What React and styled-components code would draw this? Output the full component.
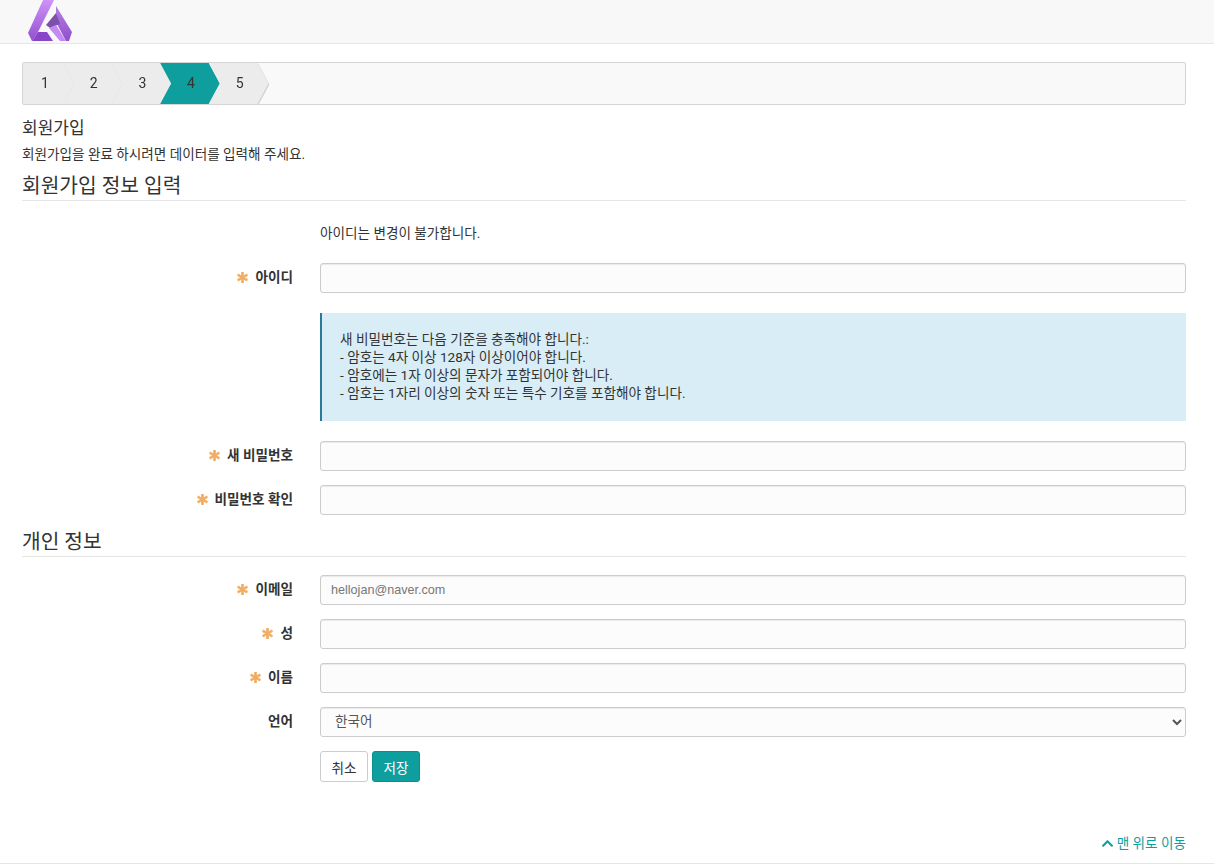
import React from 'react';
import styled, { createGlobalStyle } from 'styled-components';
import { FaAsterisk, FaChevronUp } from 'react-icons/fa';

const steps = ['1', '2', '3', '4', '5'];

const Logo = () => (
  <svg width="46" height="42" viewBox="0 0 46 42">
    <defs>
      <linearGradient id="logoLeft" x1="0" y1="0" x2="0" y2="1">
        <stop offset="0" stopColor="#cf92f8" />
        <stop offset="1" stopColor="#9050d0" />
      </linearGradient>
      <linearGradient id="logoRight" x1="0" y1="0" x2="0" y2="1">
        <stop offset="0" stopColor="#b67ce8" />
        <stop offset="1" stopColor="#8f50cc" />
      </linearGradient>
    </defs>
    <polygon points="16,0 27,0 11,32 5,41 1,33" fill="url(#logoLeft)" />
    <polygon points="5,41 11,32 20,32 26,41" fill="#8a46ca" />
    <polygon points="29,6 45,32 42,41 39,41 31,26 29,13" fill="url(#logoRight)" />
    <polygon points="19,25 29,13 33,24 23,28" fill="#7b52a8" />
    <polygon points="22,28 29,25 39,41 33,41" fill="#c58af2" />
  </svg>
);

export default function App() {
  return (
    <>
      <GlobalStyle />
      <Header>
        <LogoWrap>
          <Logo />
        </LogoWrap>
      </Header>
      <Page>
        <Wizard>
          {steps.map((s) => (
            <StepWrap key={s}>
              <Step active={s === '4'}>{s}</Step>
            </StepWrap>
          ))}
        </Wizard>
        <Title>회원가입</Title>
        <Sub>회원가입을 완료 하시려면 데이터를 입력해 주세요.</Sub>
        <Legend>회원가입 정보 입력</Legend>
        <Note>아이디는 변경이 불가합니다.</Note>
        <Row>
          <Label required>아이디</Label>
          <Input />
        </Row>
        <Alert>
          새 비밀번호는 다음 기준을 충족해야 합니다.:
          <br />- 암호는 4자 이상 128자 이상이어야 합니다.
          <br />- 암호에는 1자 이상의 문자가 포함되어야 합니다.
          <br />- 암호는 1자리 이상의 숫자 또는 특수 기호를 포함해야 합니다.
        </Alert>
        <Row>
          <Label required>새 비밀번호</Label>
          <Input type="password" />
        </Row>
        <Row>
          <Label required>비밀번호 확인</Label>
          <Input type="password" />
        </Row>
        <Legend second>개인 정보</Legend>
        <Fields>
          <Row>
            <Label required>이메일</Label>
            <Input defaultValue="hellojan@naver.com" />
          </Row>
          <Row>
            <Label required>성</Label>
            <Input />
          </Row>
          <Row>
            <Label required>이름</Label>
            <Input />
          </Row>
          <Row>
            <Label>언어</Label>
            <Select defaultValue="ko">
              <option value="ko">한국어</option>
            </Select>
          </Row>
        </Fields>
        <Actions>
          <Button>취소</Button>
          <Button primary>저장</Button>
        </Actions>
        <TopLink>
          <FaChevronUp size={13} />
          맨 위로 이동
        </TopLink>
      </Page>
      <Footer />
    </>
  );
}

const Label = ({ required, children }) => (
  <LabelText>
    {required && <Star />}
    {children}
  </LabelText>
);

const GlobalStyle = createGlobalStyle`
  html, body {
    margin: 0;
    padding: 0;
    background: #fff;
    overflow: hidden;
  }
  body {
    font-family: Roboto, 'Noto Sans CJK KR', sans-serif;
    font-size: 13.6px;
    color: #333;
  }
  * {
    box-sizing: border-box;
  }
`;

const Header = styled.div`
  height: 44px;
  background: #f8f8f8;
  border-bottom: 1px solid #e7e7e7;
  overflow: hidden;
`;

const LogoWrap = styled.div`
  padding-left: 27px;
  height: 42px;
`;

const Page = styled.div`
  padding: 18px 28px 0 22px;
`;

const Wizard = styled.div`
  display: flex;
  height: 43px;
  background: #f9f9f9;
  border: 1px solid #d4d4d4;
  border-radius: 2px;
  overflow: hidden;
`;

const StepWrap = styled.div`
  width: 48.6px;
  filter: drop-shadow(1px 1px 0 #d2d2d2);

  &:first-child {
    width: 40px;
  }
`;

const Step = styled.div`
  width: 59.6px;
  height: 41px;
  line-height: 41px;
  padding-left: 13px;
  padding-right: 11px;
  text-align: center;
  font-size: 14px;
  color: #333;
  background: ${(p) => (p.active ? '#0e9e9e' : '#ececec')};
  clip-path: polygon(0 0, 48.6px 0, 100% 50%, 48.6px 100%, 0 100%, 11px 50%);

  ${StepWrap}:first-child & {
    width: 51px;
    padding-left: 4px;
    clip-path: polygon(0 0, 40px 0, 100% 50%, 40px 100%, 0 100%);
  }
`;

const Title = styled.h1`
  margin: 14px 0 0;
  font-size: 17px;
  font-weight: 400;
  line-height: 18px;
  color: #333;
`;

const Sub = styled.p`
  margin: 9px 0 0;
  font-size: 13.6px;
  line-height: 16px;
  color: #333;
`;

const Legend = styled.h2`
  margin: ${(p) => (p.second ? '12px' : '6px')} 0 ${(p) => (p.second ? '18px' : '0')};
  height: ${(p) => (p.second ? '30px' : '33px')};
  padding-top: ${(p) => (p.second ? '3px' : '6px')};
  font-size: 20.3px;
  font-weight: 400;
  line-height: 24px;
  color: #333;
  border-bottom: 1px solid #e5e5e5;
`;

const Note = styled.div`
  margin: 24px 0 0 298px;
  height: 16px;
  line-height: 16px;
`;

const Row = styled.div`
  display: flex;
  align-items: center;
  margin-top: 14px;
  gap: 27px;

  ${Note} + & {
    margin-top: 22px;
  }
`;

const Fields = styled.div`
  & > ${Row}:first-child {
    margin-top: 0;
  }
`;

const LabelText = styled.label`
  display: flex;
  align-items: center;
  justify-content: flex-end;
  width: 271px;
  padding-bottom: 4px;
  font-weight: 700;
  font-size: 13.6px;
  color: #333;
`;

const Star = styled(FaAsterisk)`
  color: #f0ad63;
  font-size: 11px;
  margin-right: 7px;
  margin-top: 3px;
  stroke: currentColor;
  stroke-width: 40;
`;

const Input = styled.input`
  flex: 1;
  height: 30px;
  padding: 0 10px;
  background: #fcfcfc;
  border: 1px solid #ccc;
  border-radius: 3px;
  box-shadow: inset 0 1px 1px rgba(0, 0, 0, 0.075);
  font-family: 'Liberation Sans', sans-serif;
  font-size: 12.6px;
  color: #777;
  outline: none;
`;

const Select = styled.select`
  flex: 1;
  height: 30px;
  padding: 0 10px 2px;
  background: #fcfcfc;
  border: 1px solid #ccc;
  border-radius: 3px;
  box-shadow: inset 0 1px 1px rgba(0, 0, 0, 0.075);
  font: inherit;
  color: #555;
  outline: none;
`;

const Alert = styled.div`
  margin: 20px 0 20px 298px;
  padding: 17px 18px 19px;
  height: 108px;
  background: #d9edf7;
  border-left: 2px solid #2a7a9b;
  line-height: 18px;
  color: #333;
`;

const Actions = styled.div`
  display: flex;
  gap: 4px;
  margin: 14px 0 0 298px;
`;

const Button = styled.button`
  height: 31px;
  width: 48px;
  padding: 0;
  font: inherit;
  border-radius: 3px;
  border: 1px solid ${(p) => (p.primary ? '#0c8f8f' : '#ccc')};
  background: ${(p) => (p.primary ? '#0e9e9e' : '#fff')};
  color: ${(p) => (p.primary ? '#fff' : '#333')};
`;

const TopLink = styled.div`
  display: flex;
  justify-content: flex-end;
  align-items: center;
  gap: 3px;
  margin-top: 52px;
  color: #0e9e9e;
  font-size: 13.6px;
  line-height: 18px;
`;

const Footer = styled.div`
  margin-top: 11px;
  border-top: 1px solid #e5e5e5;
`;
